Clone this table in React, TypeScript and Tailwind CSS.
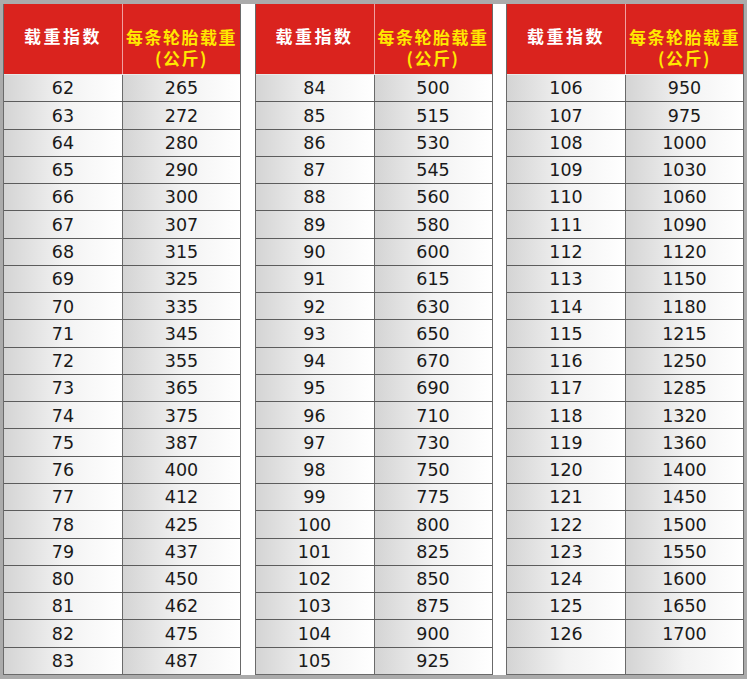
const cols: [number, number | null][][] = [
  [
    [62, 265], [63, 272], [64, 280], [65, 290], [66, 300], [67, 307], [68, 315], [69, 325],
    [70, 335], [71, 345], [72, 355], [73, 365], [74, 375], [75, 387], [76, 400], [77, 412],
    [78, 425], [79, 437], [80, 450], [81, 462], [82, 475], [83, 487],
  ],
  [
    [84, 500], [85, 515], [86, 530], [87, 545], [88, 560], [89, 580], [90, 600], [91, 615],
    [92, 630], [93, 650], [94, 670], [95, 690], [96, 710], [97, 730], [98, 750], [99, 775],
    [100, 800], [101, 825], [102, 850], [103, 875], [104, 900], [105, 925],
  ],
  [
    [106, 950], [107, 975], [108, 1000], [109, 1030], [110, 1060], [111, 1090], [112, 1120],
    [113, 1150], [114, 1180], [115, 1215], [116, 1250], [117, 1285], [118, 1320], [119, 1360],
    [120, 1400], [121, 1450], [122, 1500], [123, 1550], [124, 1600], [125, 1650], [126, 1700],
  ],
];

const cell =
  "min-h-0 flex items-center justify-center bg-linear-to-r from-[#d4d4d4] via-[#f2f2f2] to-white";

const Table = ({ rows }: { rows: [number, number | null][] }) => {
  const filled = [...rows];
  while (filled.length < 22) filled.push([0, null]);
  return (
    <div className="w-[238px] h-full flex flex-col border-l border-r border-b border-[#6a6a6a]">
      <div className="h-[70px] flex-none flex bg-[#da231e] font-bold text-[17px] leading-[21px] font-['Noto_Sans_CJK_SC',sans-serif]">
        <div className="w-[119px] border-r border-[#f0a0a0] text-white text-center pt-[21px] tracking-[2.5px]">
          载重指数
        </div>
        <div className="flex-1 text-[#ffe800] text-center pt-[22px] tracking-[1.5px] whitespace-nowrap">
          <div className="h-[21px]">每条轮胎载重</div>
          <div className="h-[21px]">(公斤)</div>
        </div>
      </div>
      <div className="flex-1 min-h-0 flex flex-col border-t border-[#e8e8e8]">
        {filled.map(([a, b], i) => (
          <div
            key={i}
            className={`flex-1 min-h-0 flex text-[17.5px] leading-none text-[#1a1a1a] font-['DejaVu_Sans',sans-serif] ${
              i < 21 ? "border-b border-[#5c5c5c]" : ""
            }`}
          >
            <div className={`${cell} w-[119px] flex-none border-r border-[#6a6a6a] pt-[2px]`}>
              {b === null ? "" : a}
            </div>
            <div className={`${cell} flex-1 pt-[2px]`}>{b === null ? "" : b}</div>
          </div>
        ))}
      </div>
    </div>
  );
};

export default function App() {
  return (
    <div className="w-[747px] h-[679px] bg-[#ababab] pt-[4px] pl-[3px] pr-[3px] pb-[4px]">
      <div className="h-full bg-white flex justify-between">
        {cols.map((rows, i) => (
          <Table key={i} rows={rows} />
        ))}
      </div>
    </div>
  );
}
